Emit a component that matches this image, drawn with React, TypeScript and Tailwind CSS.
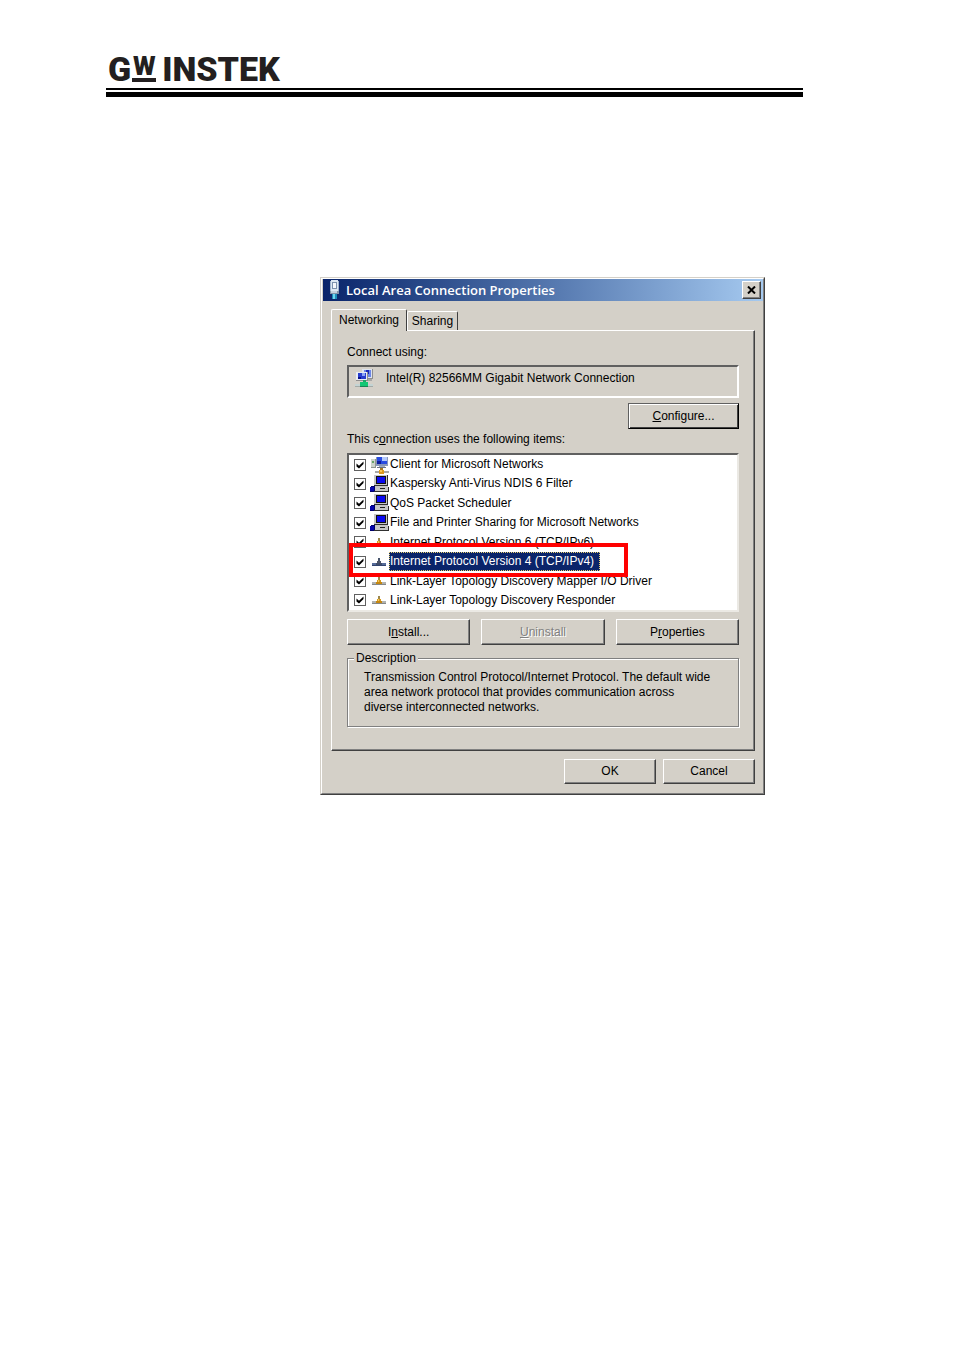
import { ReactNode } from "react";

type IconName = "client" | "service" | "protocol" | "protocolSelected";

interface ConnectionItem {
  id: string;
  label: string;
  icon: IconName;
  selected?: boolean;
}

const items: ConnectionItem[] = [
  { id: "client", label: "Client for Microsoft Networks", icon: "client" },
  { id: "ndis", label: "Kaspersky Anti-Virus NDIS 6 Filter", icon: "service" },
  { id: "qos", label: "QoS Packet Scheduler", icon: "service" },
  {
    id: "sharing",
    label: "File and Printer Sharing for Microsoft Networks",
    icon: "service",
  },
  {
    id: "ipv6",
    label: "Internet Protocol Version 6 (TCP/IPv6)",
    icon: "protocol",
  },
  {
    id: "ipv4",
    label: "Internet Protocol Version 4 (TCP/IPv4)",
    icon: "protocolSelected",
    selected: true,
  },
  {
    id: "mapper",
    label: "Link-Layer Topology Discovery Mapper I/O Driver",
    icon: "protocol",
  },
  {
    id: "responder",
    label: "Link-Layer Topology Discovery Responder",
    icon: "protocol",
  },
];

const Logo = () => (
  <div className="flex h-8 items-center gap-[6px] pl-0.5 font-['Roboto'] text-[34px] leading-8 font-black text-[#231f20]">
    <span className="flex items-start">
      <span>G</span>
      <span className="mt-1 ml-px flex h-[25px] w-6 flex-col items-center justify-between border-b-4 border-[#231f20] text-[26px] leading-[18px]">
        W
      </span>
    </span>
    <span>INSTEK</span>
  </div>
);

const PlugIcon = () => (
  <svg width="16" height="20" viewBox="0 0 16 20" shapeRendering="crispEdges">
    <rect x="4" y="1" width="9" height="11" fill="#9fb4cc" />
    <rect x="5" y="0" width="7" height="12" fill="#dce8f2" />
    <rect x="6" y="2" width="5" height="7" fill="#7d93ad" />
    <rect x="7" y="3" width="3" height="5" fill="#f4f8fb" />
    <rect x="4" y="11" width="9" height="3" fill="#8393a6" />
    <rect x="5" y="11" width="6" height="2" fill="#c5d2de" />
    <rect x="6" y="14" width="5" height="5" fill="#1a8db8" />
    <rect x="7" y="14" width="2" height="5" fill="#73d4ed" />
  </svg>
);

const AdapterIcon = () => (
  <svg width="18" height="19" viewBox="0 0 18 19" shapeRendering="crispEdges">
    <rect x="7" y="0" width="11" height="10" fill="#8e8e8e" />
    <rect x="7" y="0" width="10" height="9" fill="#dde3ee" />
    <rect x="9" y="1" width="7" height="7" fill="#6d86e6" />
    <rect x="11" y="1" width="3" height="4" fill="#1726b8" />
    <rect x="1" y="3" width="12" height="9" fill="#8e8e8e" />
    <rect x="1" y="3" width="11" height="8" fill="#e8ecf4" />
    <rect x="3" y="4" width="8" height="6" fill="#263cce" />
    <rect x="7" y="4" width="3" height="3" fill="#8da5f5" />
    <rect x="3" y="8" width="3" height="2" fill="#0a118a" />
    <rect x="13" y="10" width="4" height="2" fill="#a7a7a7" />
    <rect x="8" y="11" width="3" height="3" fill="#20a568" />
    <rect x="0" y="15" width="18" height="2" fill="#c4d4d4" />
    <rect x="0" y="17" width="18" height="1" fill="#a3aaa7" />
    <rect x="5" y="13" width="8" height="4" fill="#13c774" />
    <rect x="5" y="17" width="8" height="1" fill="#188454" />
  </svg>
);

const ClientIcon = () => (
  <svg width="19" height="18" viewBox="0 0 19 18" shapeRendering="crispEdges">
    <rect x="1" y="3" width="5" height="9" fill="#8f9690" />
    <rect x="1" y="3" width="4" height="8" fill="#ccd3cb" />
    <rect x="2" y="5" width="2" height="2" fill="#66a367" />
    <rect x="6" y="1" width="12" height="9" fill="#8796bb" />
    <rect x="7" y="1" width="10" height="7" fill="#284be0" />
    <rect x="12" y="1" width="5" height="4" fill="#b3c8fa" />
    <rect x="7" y="5" width="4" height="3" fill="#0c1c9d" />
    <rect x="9" y="10" width="6" height="1" fill="#a5acb8" />
    <rect x="7" y="11" width="9" height="1" fill="#697385" />
    <rect x="10" y="12" width="3" height="2" fill="#a87a21" />
    <rect x="5" y="15" width="14" height="2" fill="#a8a8a8" />
    <rect x="9" y="14" width="5" height="4" fill="#dc981b" />
    <rect x="10" y="14" width="2" height="2" fill="#f5c454" />
  </svg>
);

const ServiceIcon = () => (
  <svg width="19" height="18" viewBox="0 0 19 18" shapeRendering="crispEdges">
    <rect x="4" y="0" width="14" height="11" fill="#303030" />
    <rect x="4" y="0" width="13" height="10" fill="#c6c6c6" />
    <rect x="6" y="1" width="10" height="8" fill="#101010" />
    <rect x="7" y="2" width="8" height="6" fill="#0909f0" />
    <rect x="7" y="11" width="9" height="1" fill="#8b8b8b" />
    <rect x="4" y="12" width="15" height="5" fill="#303030" />
    <rect x="4" y="11" width="14" height="5" fill="#c6c6c6" />
    <rect x="10" y="13" width="5" height="1" fill="#202020" />
    <path d="M1 11h4v5H4v1H0v-5h1z" fill="#00006b" />
    <rect x="0" y="12" width="4" height="4" fill="#0606ad" />
  </svg>
);

const ProtocolIcon = ({ selected = false }: { selected?: boolean }) => (
  <svg width="19" height="18" viewBox="0 0 19 18" shapeRendering="crispEdges">
    <rect x="2" y="10" width="14" height="2" fill={selected ? "#566b99" : "#b1b3b1"} />
    <rect x="2" y="12" width="14" height="1" fill={selected ? "#31446f" : "#858785"} />
    <rect x="8" y="5" width="2" height="4" fill={selected ? "#48556d" : "#9c884f"} />
    <rect x="7" y="8" width="4" height="4" fill={selected ? "#505667" : "#d5981c"} />
    <rect x="6" y="10" width="6" height="2" fill={selected ? "#404c68" : "#c58710"} />
    {!selected && <rect x="8" y="8" width="1" height="2" fill="#f4c95b" />}
  </svg>
);

const ItemIcon = ({ name }: { name: IconName }) => {
  if (name === "client") return <ClientIcon />;
  if (name === "service") return <ServiceIcon />;
  return <ProtocolIcon selected={name === "protocolSelected"} />;
};

interface PushButtonProps {
  children: ReactNode;
  className?: string;
  disabled?: boolean;
}

const PushButton = ({
  children,
  className = "h-[26px]",
  disabled = false,
}: PushButtonProps) => (
  <button
    type="button"
    disabled={disabled}
    className={`border border-t-white border-r-[#404040] border-b-[#404040] border-l-white shadow-[inset_-1px_-1px_0_#808080] disabled:text-[#808080] disabled:[text-shadow:1px_1px_0_#fff] ${className}`}
  >
    {children}
  </button>
);

const ItemRow = ({ item }: { item: ConnectionItem }) => (
  <li className="relative flex h-[19px] items-center pl-[5px]">
    <span className="relative size-3">
      <input
        id={item.id}
        type="checkbox"
        defaultChecked
        className="peer block size-3 appearance-none border border-[#606060] bg-white"
      />
      <svg
        viewBox="0 0 12 12"
        className="pointer-events-none absolute inset-0 hidden size-3 peer-checked:block"
      >
        <path d="M2.5 4.5v3L5 9.5l4.5-4.5V2.5L5 6.8z" fill="#000" />
      </svg>
    </span>
    <span className="ml-1 w-[19px]">
      <ItemIcon name={item.icon} />
    </span>
    <label
      htmlFor={item.id}
      className={
        item.selected
          ? "h-[19px] border border-dotted border-[#e8d070] bg-[#0a246a] pr-[5px] leading-[17px] whitespace-nowrap text-white"
          : "pl-px leading-[19px] whitespace-nowrap"
      }
    >
      {item.label}
    </label>
    {item.selected && (
      <span className="pointer-events-none absolute -top-[9px] -bottom-[6px] left-0 z-10 w-[279px] border-4 border-[#ff0000]" />
    )}
  </li>
);

const PropertiesDialog = () => (
  <section
    aria-label="Local Area Connection Properties"
    className="border border-t-[#d4d0c8] border-r-[#404040] border-b-[#404040] border-l-[#d4d0c8] bg-[#d4d0c8] font-['Liberation_Sans',sans-serif] text-xs leading-[15px] text-black"
  >
    <div className="border border-t-white border-r-[#808080] border-b-[#808080] border-l-white pb-[9px] pl-px">
      <div className="flex h-[22px] items-center bg-linear-to-r from-[#0a246a] to-[#a6caf0] pr-0.5 pl-[3px]">
        <PlugIcon />
        <h1 className="grow pl-1 font-['Open_Sans',sans-serif] text-[13px] font-semibold text-white">
          Local Area Connection Properties
        </h1>
        <button
          type="button"
          aria-label="Close"
          className="grid h-[18px] w-[19px] place-items-center border border-t-white border-r-[#404040] border-b-[#404040] border-l-white bg-[#d4d0c8] shadow-[inset_-1px_-1px_0_#808080]"
        >
          <svg width="9" height="8" viewBox="0 0 9 8">
            <path d="M1 0.5l7 7M8 0.5l-7 7" stroke="#000" strokeWidth="2" />
          </svg>
        </button>
      </div>

      <div className="px-2 pt-2">
        <div role="tablist" className="flex items-end">
          <button
            type="button"
            role="tab"
            aria-selected="true"
            className="relative -mb-px h-[22px] w-[76px] rounded-t-xs border border-b-0 border-t-white border-r-[#404040] border-l-white bg-[#d4d0c8]"
          >
            Networking
          </button>
          <button
            type="button"
            role="tab"
            aria-selected="false"
            className="h-[19px] w-[51px] rounded-t-xs border border-b-0 border-t-white border-r-[#404040] border-l-white"
          >
            Sharing
          </button>
        </div>

        <div
          role="tabpanel"
          className="border border-t-white border-r-[#404040] border-b-[#404040] border-l-white px-[15px] pt-[14px] pb-[23px] shadow-[inset_-1px_-1px_0_#808080]"
        >
          <p>Connect using:</p>
          <div className="mt-[5px] flex h-[33px] border-2 border-t-[#606060] border-r-white border-b-white border-l-[#606060] pt-0.5 pl-[6px]">
            <AdapterIcon />
            <span className="pt-0.5 pl-[13px]">
              Intel(R) 82566MM Gigabit Network Connection
            </span>
          </div>

          <div className="mt-[5px] flex justify-end">
            <button
              type="button"
              className="h-[26px] w-[111px] border border-t-[#606060] border-r-black border-b-black border-l-[#606060] shadow-[inset_1px_1px_0_#fff,inset_-1px_-1px_0_#404040]"
            >
              <u>C</u>onfigure...
            </button>
          </div>

          <p className="mt-[3px]">
            This c<u>o</u>nnection uses the following items:
          </p>
          <ul className="mt-[6px] flex h-[159px] flex-col justify-between border-2 border-t-[#606060] border-r-[#ebe9e4] border-b-[#ebe9e4] border-l-[#606060] bg-white">
            {items.map((item) => (
              <ItemRow key={item.id} item={item} />
            ))}
          </ul>

          <div className="mt-[7px] grid grid-cols-3 gap-[11px]">
            <PushButton>
              I<u>n</u>stall...
            </PushButton>
            <PushButton disabled>
              <u>U</u>ninstall
            </PushButton>
            <PushButton>
              P<u>r</u>operties
            </PushButton>
          </div>

          <fieldset className="mt-[6px] border border-[#808080] pt-1 pr-6 pb-[11px] pl-4 shadow-[1px_1px_0_#fff,inset_1px_1px_0_#fff]">
            <legend className="-ml-[10px] bg-[#d4d0c8] px-0.5">
              Description
            </legend>
            <p>
              Transmission Control Protocol/Internet Protocol. The default wide
              area network protocol that provides communication across diverse
              interconnected networks.
            </p>
          </fieldset>
        </div>

        <div className="mt-2 flex justify-end gap-[7px]">
          <PushButton className="h-[25px] w-[92px]">OK</PushButton>
          <PushButton className="h-[25px] w-[92px]">Cancel</PushButton>
        </div>
      </div>
    </div>
  </section>
);

const App = () => {
  return (
    <div className="min-h-screen bg-white pt-[53px] pr-[151px] pb-16 pl-[106px]">
      <header>
        <Logo />
        <div className="mt-[3px] h-[9px] border-t-2 border-b-5 border-black" />
      </header>
      <main className="mt-[180px] mr-[38px] ml-[214px]">
        <PropertiesDialog />
      </main>
    </div>
  );
};

export default App;
